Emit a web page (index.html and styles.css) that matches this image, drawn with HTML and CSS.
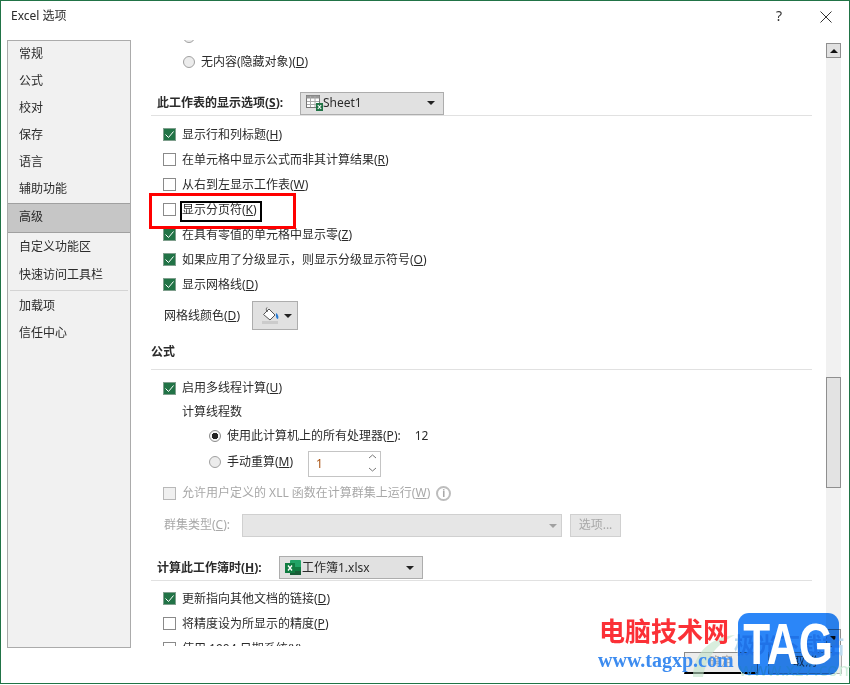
FILE: index.html
```html
<!DOCTYPE html>
<html lang="zh-CN">
<head>
<meta charset="utf-8">
<title>Excel 选项</title>
<link rel="stylesheet" href="styles.css">
</head>
<body>
<div class="window">
  <header class="titlebar">
    <span class="title">Excel 选项</span>
    <span class="help">?</span>
    <svg class="close" width="12" height="12" viewBox="0 0 12 12"><path d="M.5.5l11 11M11.500.5l-11 11" stroke="#333" stroke-width="1" fill="none"/></svg>
  </header>
  <div class="body">
    <nav class="sidebar">
      <div class="nav-item nav-first">常规</div>
      <div class="nav-item">公式</div>
      <div class="nav-item">校对</div>
      <div class="nav-item">保存</div>
      <div class="nav-item">语言</div>
      <div class="nav-item">辅助功能</div>
      <div class="nav-item nav-active">高级</div>
      <div class="nav-item nav-tall">自定义功能区</div>
      <div class="nav-item">快速访问工具栏</div>
      <div class="nav-sep"></div>
      <div class="nav-item">加载项</div>
      <div class="nav-item">信任中心</div>
    </nav>
    <main class="content">
      <div class="clipped-row"><span class="radio"></span></div>
      <div class="row row-radio-top"><span class="radio"></span><span class="lbl">无内容(隐藏对象)(<u>D</u>)</span></div>

      <div class="heading heading-sheet">
        <b class="lbl">此工作表的显示选项(<u>S</u>):</b>
        <div class="select select-sheet">
          <svg class="sel-icon" width="17" height="16" viewBox="0 0 17 16"><rect x=".5" y=".5" width="13" height="12" fill="#fff" stroke="#777"/><rect x=".5" y=".5" width="13" height="3" fill="#999"/><path d="M4.500 1v11M9 1v11M1 6.500h12M1 9.500h12" stroke="#aaa" fill="none"/><rect x="10" y="8" width="7" height="8" fill="#217346"/><path d="M11.800 10l3.400 4M15.200 10l-3.400 4" stroke="#fff" stroke-width="1.100" fill="none"/></svg>
          <span class="lbl">Sheet1</span>
          <span class="caret"></span>
        </div>
      </div>
      <div class="row row-first"><span class="check on"><svg width="11" height="11" viewBox="0 0 11 11"><path d="M1.500 5.500l3 3 5-6" stroke="#fff" fill="none"/></svg></span><span class="lbl">显示行和列标题(<u>H</u>)</span></div>
      <div class="row"><span class="check"></span><span class="lbl">在单元格中显示公式而非其计算结果(<u>R</u>)</span></div>
      <div class="row"><span class="check"></span><span class="lbl">从右到左显示工作表(<u>W</u>)</span></div>
      <div class="row"><span class="check"></span><span class="lbl">显示分页符(<u>K</u>)</span></div>
      <div class="row"><span class="check on"><svg width="11" height="11" viewBox="0 0 11 11"><path d="M1.500 5.500l3 3 5-6" stroke="#fff" fill="none"/></svg></span><span class="lbl">在具有零值的单元格中显示零(<u>Z</u>)</span></div>
      <div class="row"><span class="check on"><svg width="11" height="11" viewBox="0 0 11 11"><path d="M1.500 5.500l3 3 5-6" stroke="#fff" fill="none"/></svg></span><span class="lbl">如果应用了分级显示，则显示分级显示符号(<u>O</u>)</span></div>
      <div class="row"><span class="check on"><svg width="11" height="11" viewBox="0 0 11 11"><path d="M1.500 5.500l3 3 5-6" stroke="#fff" fill="none"/></svg></span><span class="lbl">显示网格线(<u>D</u>)</span></div>
      <div class="color-row">
        <span class="lbl color-label">网格线颜色(<u>D</u>)</span>
        <div class="color-btn">
          <svg width="17" height="18" viewBox="0 0 17 18"><path d="M1.500 7.500L7 2l6 6-5 5z" fill="#fff" stroke="#555"/><path d="M5 .5c-1 1-1 3 .5 4.500" stroke="#555" fill="none"/><path d="M14 6c2 1 3 4 2 6-1.500 0-2.500-2-2-6z" fill="#2b7cd3"/><rect x="0" y="14" width="16" height="3" fill="#cbcbcb"/></svg>
          <span class="caret caret-color"></span>
        </div>
      </div>

      <div class="heading heading-formula"><b class="lbl">公式</b></div>
      <div class="row row-24 row-first"><span class="check on"><svg width="11" height="11" viewBox="0 0 11 11"><path d="M1.500 5.500l3 3 5-6" stroke="#fff" fill="none"/></svg></span><span class="lbl">启用多线程计算(<u>U</u>)</span></div>
      <div class="row row-24 indent-1"><span class="lbl">计算线程数</span></div>
      <div class="row row-24 indent-2"><span class="radio radio-on"></span><span class="lbl">使用此计算机上的所有处理器(<u>P</u>):</span><span class="lbl count">12</span></div>
      <div class="row row-manual indent-2">
        <span class="radio"></span><span class="lbl">手动重算(<u>M</u>)</span>
        <div class="spin">
          <span class="spin-val">1</span>
          <svg width="9" height="20" viewBox="0 0 9 20"><path d="M1 5l3.500-3L8 5M1 15l3.500 3L8 15" stroke="#777" fill="none"/></svg>
        </div>
      </div>
      <div class="row row-24 row-disabled disabled"><span class="check check-off"></span><span class="lbl">允许用户定义的 XLL 函数在计算群集上运行(<u>W</u>)</span><span class="info">i</span></div>
      <div class="cluster-row disabled">
        <span class="cluster-label">群集类型(<u>C</u>):</span>
        <div class="cluster-select"><span class="caret caret-off"></span></div>
        <div class="opt-btn">选项...</div>
      </div>

      <div class="heading heading-book">
        <b class="lbl">计算此工作簿时(<u>H</u>):</b>
        <div class="select select-book">
          <svg class="sel-icon" width="17" height="17" viewBox="0 0 17 17"><rect x="5" y="1" width="11" height="15" rx="1" fill="#21a366"/><rect x="5" y="8" width="11" height="4" fill="#107c41"/><rect x="5" y="12" width="11" height="4" fill="#185c37"/><rect x="0" y="4" width="10" height="10" fill="#107c41"/><path d="M3 6.500l4 5M7 6.500l-4 5" stroke="#fff" stroke-width="1.300" fill="none"/></svg>
          <span class="lbl">工作簿1.xlsx</span>
          <span class="caret"></span>
        </div>
      </div>
      <div class="row row-first-5"><span class="check on"><svg width="11" height="11" viewBox="0 0 11 11"><path d="M1.500 5.500l3 3 5-6" stroke="#fff" fill="none"/></svg></span><span class="lbl">更新指向其他文档的链接(<u>D</u>)</span></div>
      <div class="row"><span class="check"></span><span class="lbl">将精度设为所显示的精度(<u>P</u>)</span></div>
      <div class="row"><span class="check"></span><span class="lbl">使用 1904 日期系统(<u>Y</u>)</span></div>
    </main>
    <aside class="scrollbar">
      <div class="sb-btn"><span class="sb-up"></span></div>
      <div class="sb-thumb"></div>
      <div class="sb-btn sb-btn-down"><span class="sb-down"></span></div>
    </aside>
  </div>
  <footer class="footer">
    <div class="btn btn-ok">确定</div>
    <div class="btn">取消</div>
  </footer>

  <div class="mark-red"></div>
  <div class="mark-black"></div>

  <svg class="wm-swoosh" width="50" height="50" viewBox="0 0 50 50"><path d="M4 46C4 22 22 6 46 4 30 12 18 24 14 46z" fill="#bfe3c8" opacity=".6"/></svg>
  <div class="wm-faint">极光下载站</div>
  <div class="wm-faint-url">www.xz7.com</div>
  <div class="wm-logo"></div>
  <div class="wm-logo-text"><span class="wm-tag">TAG</span></div>
  <div class="wm-cn">电脑技术网</div>
  <div class="wm-url">www.tagxp.com</div>
</div>
</body>
</html>
```
FILE: styles.css
```css
* { box-sizing: border-box; }
html, body { margin: 0; padding: 0; background: #fff; }
body {
  width: 850px;
  height: 685px;
  overflow: hidden;
  font-family: "Noto Sans", "Noto Sans CJK SC", sans-serif;
  font-size: 12px;
  color: #2b2b2b;
}
u { text-underline-offset: 1px; }
.lbl { margin-bottom: 2px; }
.window {
  position: relative;
  width: 850px;
  height: 684px;
  border: 1px solid #217346;
  display: flex;
  flex-direction: column;
  background: #fff;
}
.titlebar {
  height: 39px;
  flex: none;
  display: flex;
  align-items: flex-start;
  padding: 5px 17px 0 10px;
}
.title { font-size: 12px; line-height: 20px; }
.help { margin-left: auto; font-size: 14px; line-height: 20px; margin-right: 38px; color: #333; }
.close { margin-top: 5px; }

.body { flex: none; height: 608px; display: flex; }
.sidebar {
  margin-left: 6px;
  width: 124px;
  flex: none;
  border: 1px solid #ababab;
  background: #f1f1f1;
}
.nav-item { height: 27px; line-height: 27px; padding-left: 11px; }
.nav-first { margin-top: -1px; }
.nav-tall { height: 28px; }
.nav-active {
  height: 30px;
  margin-top: 1px;
  background: #c6c6c6;
  border: 1px solid #a0a0a0;
  border-left: 0;
  border-right: 0;
  line-height: 25px;
}
.nav-sep { height: 1px; background: #d4d4d4; margin: 2px 2px 1px; }

.content {
  width: 695px;
  height: 606px;
  flex: none;
  overflow: hidden;
  padding: 0 14px 0 20px;
}
.clipped-row { height: 3px; overflow: hidden; display: flex; align-items: flex-end; padding-left: 32px; }
.row { height: 25px; display: flex; align-items: center; padding-left: 12px; white-space: nowrap; }
.row-24 { height: 24px; }
.row-radio-top { margin-top: 6px; padding-left: 32px; }
.row-first { margin-top: 6px; }
.row-first-5 { margin-top: 5px; }
.check {
  width: 13px;
  height: 13px;
  flex: none;
  margin-right: 6px;
  border: 1px solid #8a8a8a;
  background: #fff;
  display: flex;
  align-items: center;
  justify-content: center;
}
.check.on { background: #217346; border-color: #7f9f8d; }
.check-off { background: #f0f0f0; border-color: #b8b8b8; }
.radio {
  width: 12px;
  height: 12px;
  flex: none;
  margin-right: 6px;
  border: 1px solid #a0a0a0;
  border-radius: 50%;
  background: #ececec;
}
.radio-on { background: radial-gradient(circle, #222 0 3px, #f4f4f4 3.500px); border-color: #8a8a8a; }

.heading { display: flex; align-items: center; border-bottom: 1px solid #e1e1e1; }
.heading-sheet { margin-top: 18px; height: 24px; padding: 0 0 1px 6px; }
.heading-sheet b { width: 143px; }
.heading-formula { margin-top: 10px; height: 30px; padding-bottom: 5px; }
.heading-book { margin-top: 19px; height: 25px; padding: 0 0 1px 6px; }
.heading-book b { width: 122px; }
.select {
  display: flex;
  align-items: center;
  height: 23px;
  background: #e1e1e1;
  border: 1px solid #adadad;
  padding: 0 8px 0 5px;
}
.select-sheet { width: 144px; }
.select-book { width: 144px; }
.sel-icon { flex: none; }
.caret {
  margin-left: auto;
  width: 0;
  height: 0;
  border-left: 4px solid transparent;
  border-right: 4px solid transparent;
  border-top: 4px solid #222;
}
.color-row { height: 29px; margin-top: 4px; padding-left: 13px; display: flex; align-items: center; }
.color-label { width: 88px; }
.color-btn {
  width: 46px;
  height: 29px;
  background: #e1e1e1;
  border: 1px solid #adadad;
  display: flex;
  align-items: center;
  padding-left: 9px;
}
.caret-color { margin-left: 5px; }

.indent-1 { padding-left: 31px; }
.indent-2 { padding-left: 58px; }
.count { margin-left: 14px; }
.row-manual { height: 26px; margin-top: 1px; }
.spin {
  width: 73px;
  height: 26px;
  margin: 4px 0 0 15px;
  border: 1px solid #c4c4c4;
  display: flex;
  align-items: center;
  justify-content: space-between;
  padding: 0 3px 2px 7px;
  flex: none;
}
.spin-val { color: #a8500f; }
.disabled { color: #a8a8a8; }
.row-disabled { margin-top: 6px; }
.info {
  width: 15px;
  height: 15px;
  margin-left: 6px;
  border: 2px solid #bdbdbd;
  border-radius: 50%;
  font-size: 10px;
  line-height: 11px;
  text-align: center;
  font-weight: 700;
  color: #a8a8a8;
}
.cluster-row { height: 23px; margin-top: 9px; padding-left: 13px; display: flex; }
.cluster-label { width: 78px; line-height: 21px; }
.cluster-select {
  width: 320px;
  background: #e6e6e6;
  border: 1px solid #d0d0d0;
  display: flex;
  align-items: center;
  padding-right: 4px;
}
.caret-off { border-top-color: #a0a0a0; }
.opt-btn {
  width: 51px;
  margin-left: 8px;
  background: #e6e6e6;
  border: 1px solid #d0d0d0;
  text-align: center;
  line-height: 19px;
}

.scrollbar {
  width: 15px;
  flex: none;
  margin-top: 3px;
  background: #f1f1f1;
  display: flex;
  flex-direction: column;
}
.sb-btn {
  height: 15px;
  flex: none;
  background: #e1e1e1;
  border: 1px solid #8f8f8f;
  display: flex;
  align-items: center;
  justify-content: center;
}
.sb-btn-down { height: 18px; margin-top: auto; margin-bottom: 1px; }
.sb-up { width: 0; height: 0; border-left: 4px solid transparent; border-right: 4px solid transparent; border-bottom: 4px solid #111; }
.sb-down { width: 0; height: 0; border-left: 4px solid transparent; border-right: 4px solid transparent; border-top: 4px solid #111; }
.sb-thumb { height: 111px; flex: none; margin-top: 319px; background: #e3e3e3; border: 1px solid #8f8f8f; }

.footer { display: flex; justify-content: flex-end; gap: 10px; padding: 4px 7px 0 0; }
.btn {
  width: 74px;
  height: 22px;
  background: #ececec;
  border: 1px solid #adadad;
  text-align: center;
  line-height: 18px;
  color: #555;
}
.btn-ok { border-color: #8a8a8a; border-bottom: 2px solid #000; color: #aaa; }

.mark-red { position: absolute; left: 148px; top: 192px; width: 147px; height: 36px; border: 3px solid #f00; }
.mark-black { position: absolute; left: 179px; top: 200px; width: 82px; height: 21px; border: 2px solid #000; }

.wm-swoosh { position: absolute; left: 688px; top: 630px; }
.wm-faint { position: absolute; left: 733px; top: 630px; font-size: 22px; font-weight: 700; line-height: 26px; color: #bcd9ee; white-space: nowrap; }
.wm-faint-url { position: absolute; left: 738px; top: 657px; font-size: 18px; line-height: 22px; color: #cfeeda; white-space: nowrap; }
.wm-logo {
  position: absolute;
  left: 737px;
  top: 612px;
  width: 101px;
  height: 62px;
  border-radius: 11px;
  background: #2b86f8;
  mix-blend-mode: multiply;
}
.wm-logo-text {
  position: absolute;
  left: 737px;
  top: 612px;
  width: 101px;
  height: 62px;
  display: flex;
  justify-content: center;
  color: #fff;
  font-family: "Liberation Sans", sans-serif;
  font-weight: 700;
  font-size: 58px;
  line-height: 62px;
}
.wm-tag { display: block; flex: none; transform: scaleX(.76); }
.wm-cn {
  position: absolute;
  left: 598px;
  top: 611px;
  font-family: "Noto Sans CJK SC", sans-serif;
  font-size: 26px;
  line-height: 36px;
  font-weight: 700;
  color: #fb3036;
  white-space: nowrap;
}
.wm-url {
  position: absolute;
  left: 597px;
  top: 648px;
  font-family: "Liberation Serif", serif;
  font-size: 20px;
  line-height: 22px;
  font-weight: 700;
  color: #3d8cf0;
  white-space: nowrap;
}
```
